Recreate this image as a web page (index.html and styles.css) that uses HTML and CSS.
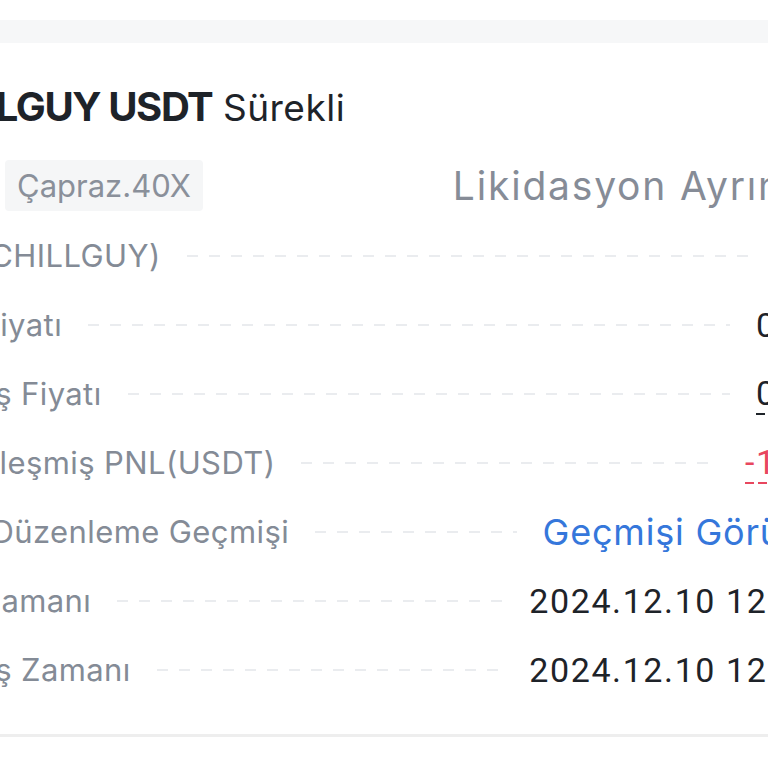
FILE: index.html
```html
<!DOCTYPE html>
<html lang="tr">
<head>
<meta charset="utf-8">
<title>CHILLGUY USDT Sürekli</title>
<link rel="stylesheet" href="styles.css">
</head>
<body>
<div class="band"></div>
<main class="card">
  <h1 class="title"><span class="pair">CHILLGUY USDT</span> <span class="kind">Sürekli</span></h1>
  <div class="tags">
    <span class="tag">Çapraz.40X</span>
    <span class="liq">Likidasyon Ayrıntıları</span>
  </div>
  <div class="row"><span class="label">Tutar (CHILLGUY)</span><span class="lead"></span><span class="value num">1.440</span></div>
  <div class="row"><span class="label">Açılış Fiyatı</span><span class="lead"></span><span class="value num">0.3685</span></div>
  <div class="row"><span class="label">Kapanış Fiyatı</span><span class="lead"></span><span class="value num under">0.3596</span></div>
  <div class="row"><span class="label">Gerçekleşmiş PNL(USDT)</span><span class="lead"></span><span class="value num neg under">-12.816</span></div>
  <div class="row"><span class="label">TP/SL Düzenleme Geçmişi</span><span class="lead"></span><span class="value link">Geçmişi Görüntüle</span></div>
  <div class="row"><span class="label">Açılış Zamanı</span><span class="lead"></span><span class="value num">2024.12.10 12:08:15</span></div>
  <div class="row"><span class="label">Kapanış Zamanı</span><span class="lead"></span><span class="value num">2024.12.10 12:41:37</span></div>
</main>
<div class="divider"></div>
</body>
</html>
```
FILE: styles.css
```css
html, body {
  margin: 0;
  padding: 0;
  background: #ffffff;
  overflow: hidden;
}
body {
  width: 768px;
  height: 768px;
  font-family: Inter, "Noto Sans", "DejaVu Sans", sans-serif;
  color: #1e2329;
}
.band {
  margin-top: 20px;
  height: 23px;
  background: #f6f7f8;
}
.card {
  width: 978px;
  margin-left: -108px;
  padding-top: 40px;
}
.title {
  margin: 0 0 0 16px;
  height: 48px;
  line-height: 48px;
  white-space: nowrap;
  font-size: 40px;
  color: #1e2329;
}
.pair {
  font-weight: 700;
  letter-spacing: -1.4px;
}
.kind {
  font-weight: 400;
  font-size: 37px;
  letter-spacing: 0.5px;
  margin-left: 1px;
}
.tags {
  display: flex;
  align-items: center;
  margin-top: 29px;
  padding-left: 113px;
}
.tag {
  background: #f5f6f7;
  border-radius: 4px;
  height: 51px;
  line-height: 51px;
  padding: 0 12px;
  font-size: 31px;
  color: #8a909a;
  white-space: nowrap;
}
.liq {
  margin-left: 250px;
  font-size: 39px;
  letter-spacing: 1.8px;
  color: #868c97;
  white-space: nowrap;
}
.tags + .row {
  margin-top: 10px;
}
.row {
  display: flex;
  align-items: center;
  height: 69px;
  white-space: nowrap;
}
.label {
  font-size: 31px;
  letter-spacing: 0.4px;
  color: #848b96;
}
.lead {
  flex: 1;
  height: 2px;
  margin: 0 26px;
  background-image: linear-gradient(to right, #eaecef 11px, transparent 11px);
  background-size: 22px 2px;
  background-repeat: repeat-x;
}
.value {
  font-size: 36px;
  letter-spacing: 0.8px;
  color: #1e2329;
}
.num {
  font-family: Roboto, Inter, sans-serif;
  font-size: 34px;
  letter-spacing: 1.6px;
}
.under {
  padding-bottom: 2px;
  background-image: linear-gradient(to right, #1e2329 9px, transparent 9px);
  background-size: 13px 2px;
  background-repeat: repeat-x;
  background-position: left bottom;
}
.neg {
  color: #e8475e;
}
.neg.under {
  background-image: linear-gradient(to right, #e8475e 9px, transparent 9px);
}
.link {
  color: #3577db;
}
.divider {
  margin-top: 30px;
  height: 3px;
  background: #eeeeee;
}
```
